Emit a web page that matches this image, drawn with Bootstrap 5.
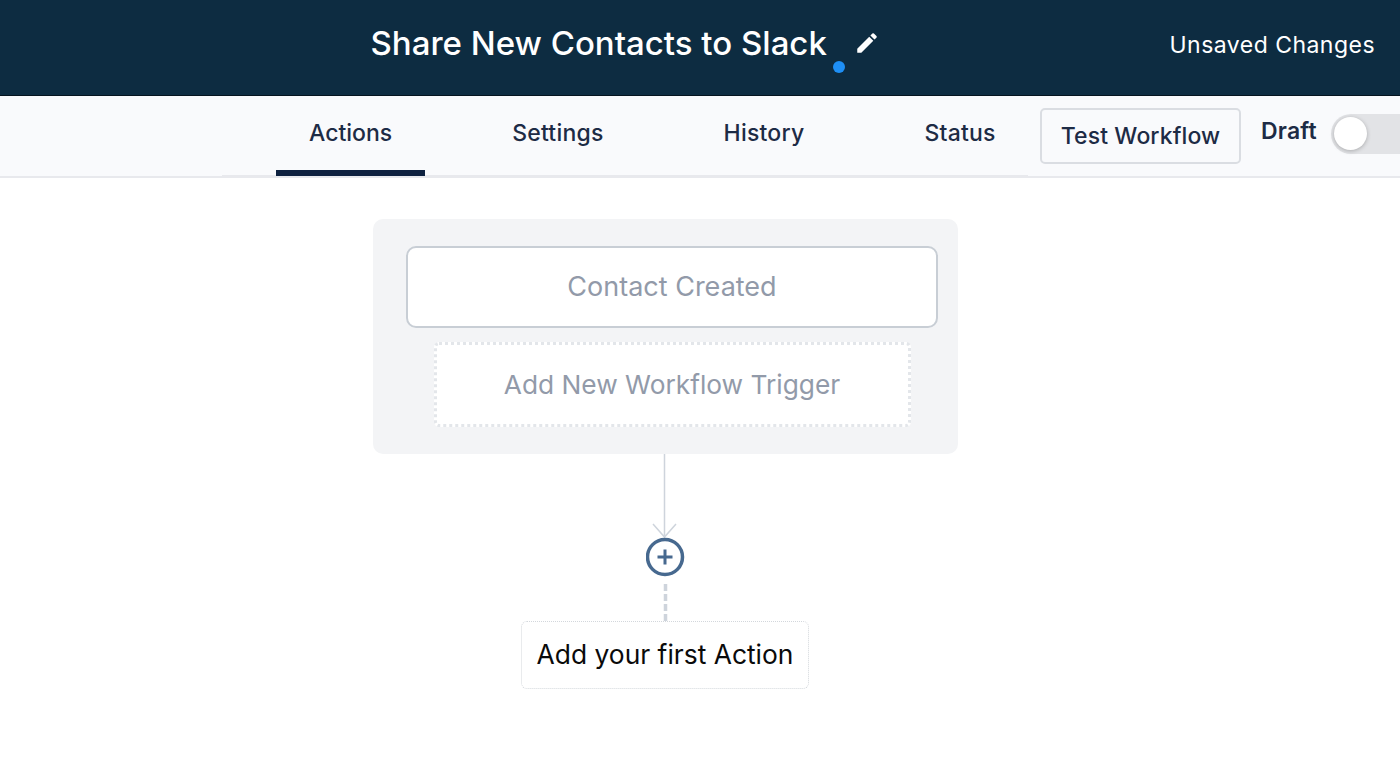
<!DOCTYPE html>
<html lang="en">
<head>
    <meta charset="UTF-8">
    <meta name="viewport" content="width=device-width, initial-scale=1.0">
    <title>Share New Contacts to Slack</title>
    <link href="https://cdn.jsdelivr.net/npm/bootstrap@5.3.0/dist/css/bootstrap.min.css" rel="stylesheet">
    <style>
        body {
            font-family: "Inter", "Liberation Sans", sans-serif;
            background-color: #fff;
            overflow: hidden;
        }
        .top-header {
            height: 96px;
            background-color: #0d2c41;
            border-bottom: 1px solid #05141f;
            color: #fff;
        }
        .title-area {
            margin-left: 370.5px;
            margin-top: 23px;
            height: 40px;
        }
        .wf-title {
            font-size: 33px;
            font-weight: 500;
            line-height: 1;
            margin: 0;
        }
        .edit-wrap {
            position: relative;
            width: 50px;
            height: 40px;
        }
        .edit-wrap svg {
            position: absolute;
            left: 27px;
            top: 7px;
        }
        .unsaved-dot {
            position: absolute;
            left: 6px;
            top: 38px;
            width: 12px;
            height: 12px;
            border-radius: 50%;
            background-color: #1e8ff5;
        }
        .unsaved-text {
            margin-right: 25px;
            margin-top: 28px;
            font-size: 23px;
            letter-spacing: .47px;
        }
        .sub-bar {
            height: 82px;
            background-color: #f9fafc;
            border-bottom: 2px solid #e8e9ed;
        }
        .tab-strip {
            flex: none;
            margin-left: 222px;
            width: 806px;
            height: 82px;
            padding-left: 54px;
            gap: 54px;
            border-bottom: 3px solid #e8e9ed;
        }
        .tab-item {
            padding: 23px 33px 0;
            font-size: 23px;
            font-weight: 500;
            line-height: 28px;
            letter-spacing: .22px;
            color: #1d2b45;
            white-space: nowrap;
        }
        .tab-item.is-active {
            border-bottom: 6px solid #0e2140;
            height: 80px;
            letter-spacing: 0;
        }
        .test-btn {
            flex: none;
            width: 201px;
            height: 56px;
            margin-left: 12px;
            margin-top: 12px;
            font-size: 23px;
            font-weight: 500;
            letter-spacing: .1px;
            color: #1d2b45;
            background-color: transparent;
            border: 2px solid #dadde2;
            border-radius: 5px;
            padding: 0;
        }
        .draft-label {
            margin-left: 20px;
            margin-top: 20px;
            font-size: 23px;
            font-weight: 600;
            line-height: 30px;
            letter-spacing: .2px;
            color: #1d2b45;
        }
        .toggle-track {
            position: relative;
            margin-left: 14px;
            margin-top: 18px;
            width: 90px;
            height: 40px;
            flex: none;
            border-radius: 20px;
            background-color: #e2e3e6;
        }
        .toggle-thumb {
            position: absolute;
            left: 3px;
            top: 3px;
            width: 33px;
            height: 33px;
            border-radius: 50%;
            background-color: #fff;
            box-shadow: 0 1px 4px rgba(0, 0, 0, .25);
        }
        .canvas-area {
            padding-top: 41px;
            padding-right: 69px;
        }
        .trigger-panel {
            width: 585px;
            height: 235px;
            background-color: #f3f4f6;
            border-radius: 10px;
            padding: 27px 20px 0 33px;
        }
        .trigger-card {
            height: 82px;
            background-color: #fff;
            border: 2px solid #c8ced5;
            border-radius: 10px;
            font-size: 27px;
            color: #929aa9;
        }
        .trigger-add {
            width: 477px;
            height: 85px;
            margin-top: 14px;
            background-color: #fff;
            border: 3px dotted #e3e6ea;
            border-radius: 5px;
            font-size: 26.3px;
            color: #929aa9;
        }
        .first-action {
            width: 288px;
            height: 68px;
            margin-right: 1px;
            background-color: #fff;
            border: 1px dotted #d3d7dc;
            border-radius: 6px;
            font-size: 26.4px;
            color: #0a0a0a;
        }
        .connector {
            display: block;
        }
    </style>
</head>
<body>
    <header class="top-header d-flex align-items-start">
        <div class="title-area d-flex align-items-center">
            <h1 class="wf-title">Share New Contacts to Slack</h1>
            <div class="edit-wrap">
                <span class="unsaved-dot"></span>
                <svg width="26" height="26" viewBox="0 0 24 24" fill="#fff">
                    <path d="M3 17.25V21h3.75L17.81 9.94l-3.75-3.75L3 17.25zM20.71 7.04a1 1 0 0 0 0-1.41l-2.34-2.34a1 1 0 0 0-1.41 0l-1.83 1.83 3.75 3.75 1.83-1.83z"/>
                </svg>
            </div>
        </div>
        <div class="unsaved-text ms-auto">Unsaved Changes</div>
    </header>

    <div class="sub-bar d-flex align-items-start">
        <nav class="tab-strip d-flex">
            <div class="tab-item is-active">Actions</div>
            <div class="tab-item">Settings</div>
            <div class="tab-item">History</div>
            <div class="tab-item">Status</div>
        </nav>
        <button type="button" class="btn test-btn">Test Workflow</button>
        <div class="draft-label">Draft</div>
        <div class="toggle-track"><span class="toggle-thumb"></span></div>
    </div>

    <main class="canvas-area d-flex flex-column align-items-center">
        <section class="trigger-panel d-flex flex-column align-items-center">
            <div class="trigger-card w-100 d-flex align-items-center justify-content-center">Contact Created</div>
            <div class="trigger-add d-flex align-items-center justify-content-center">Add New Workflow Trigger</div>
        </section>
        <svg class="connector" width="40" height="167" viewBox="0 0 40 167">
            <path d="M18.5 0V83M7 70L18.5 83L30 70" fill="none" stroke="#ced4dc" stroke-width="1.5"/>
            <circle cx="19" cy="103" r="17.5" fill="#fff" stroke="#47698f" stroke-width="3.5"/>
            <path d="M19 95.5V110.5M11.5 103H26.5" fill="none" stroke="#47698f" stroke-width="3"/>
            <path d="M19.5 167V128" fill="none" stroke="#ced4dc" stroke-width="3.5" stroke-dasharray="7 3"/>
        </svg>
        <div class="first-action d-flex align-items-center justify-content-center">Add your first Action</div>
    </main>

    <script src="https://cdn.jsdelivr.net/npm/bootstrap@5.3.0/dist/js/bootstrap.bundle.min.js"></script>
</body>
</html>
